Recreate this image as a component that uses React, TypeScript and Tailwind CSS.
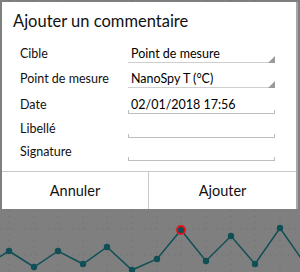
import React from "react";

const pts: [number, number][] = [
  [-15, 266], [9, 251], [34, 267], [58, 251], [83, 264], [107, 247], [132, 270],
  [157, 259], [181, 230], [206, 261], [231, 236], [255, 264], [280, 228], [305, 264],
];

function Chart() {
  const xs = [9, 34, 58, 83, 107, 132, 157, 181, 206, 231, 255, 280];
  return (
    <svg className="absolute inset-0" width={300} height={272} viewBox="0 0 300 272">
      {xs.map((x) => (
        <line key={x} x1={x} y1={0} x2={x} y2={272} stroke="#6e6e6e" strokeWidth={1} strokeDasharray="1 5" />
      ))}
      {[229, 255].map((y) => (
        <line key={y} x1={0} y1={y} x2={300} y2={y} stroke="#6e6e6e" strokeWidth={1} strokeDasharray="1 5" />
      ))}
      <polyline
        points={pts.map((p) => p.join(",")).join(" ")}
        fill="none"
        stroke="#0f4f55"
        strokeWidth={1.5}
      />
      {pts.slice(1, -1).map(([x, y]) => (
        <circle key={x} cx={x} cy={y} r={3.2} fill="#0f4f55" />
      ))}
      <circle cx={181} cy={230} r={4} fill="none" stroke="#e8101a" strokeWidth={1.8} />
    </svg>
  );
}

function Row({ label, value, kind, h }: { label: string; value: string; kind: "select" | "input"; h: string }) {
  return (
    <div className={`flex items-end ${h}`}>
      <div className="w-[126px] pl-[18px] text-[12.5px] text-[#111] leading-none pb-[3px] whitespace-nowrap">{label}</div>
      <div className="relative w-[147px] h-full flex items-end">
        <div className="pl-[3px] pb-[3px] text-[12.5px] leading-none text-black whitespace-nowrap">{value}</div>
        {kind === "select" ? (
          <>
            <div className="absolute left-0 right-0 bottom-0 h-px bg-[#cfcfcf]" />
            <svg className="absolute right-0 bottom-0" width={7} height={7} viewBox="0 0 7 7">
              <polygon points="7,0 7,7 0,7" fill="#9a9a9a" />
            </svg>
          </>
        ) : (
          <>
            <div className="absolute left-0 right-0 bottom-0 h-px bg-[#bdbdbd]" />
            <div className="absolute left-0 bottom-0 w-px h-[4px] bg-[#bdbdbd]" />
            <div className="absolute right-0 bottom-0 w-px h-[4px] bg-[#bdbdbd]" />
          </>
        )}
      </div>
    </div>
  );
}

export default function App() {
  return (
    <div
      className="relative w-[300px] h-[272px] bg-[#7f7f7f] overflow-hidden"
      style={{ fontFamily: "Lato, 'Liberation Sans', sans-serif" }}
    >
      <Chart />
      <div className="absolute left-[2px] top-[2px] w-[294px] h-[207px] bg-white flex flex-col border-r-2 border-[#a8a8a8] box-content">
        <div className="pl-[11px] pt-[11px] h-[37px] text-[16.5px] leading-none text-[#111]">Ajouter un commentaire</div>
        <div className="flex flex-col">
          <Row label="Cible" value="Point de mesure" kind="select" h="h-[24px]" />
          <Row label="Point de mesure" value="NanoSpy T (°C)" kind="select" h="h-[25px]" />
          <Row label="Date" value="02/01/2018 17:56" kind="input" h="h-[26px]" />
          <Row label="Libellé" value="" kind="input" h="h-[24px]" />
          <Row label="Signature" value="" kind="input" h="h-[23px]" />
        </div>
        <div className="flex-1" />
        <div className="flex h-[38px] border-t border-[#c8c8c8]">
          <div className="w-[147px] flex items-center justify-center text-[14.5px] text-[#111] border-r border-[#c8c8c8]">Annuler</div>
          <div className="flex-1 flex items-center justify-center text-[14.5px] text-[#111]">Ajouter</div>
        </div>
      </div>
    </div>
  );
}
